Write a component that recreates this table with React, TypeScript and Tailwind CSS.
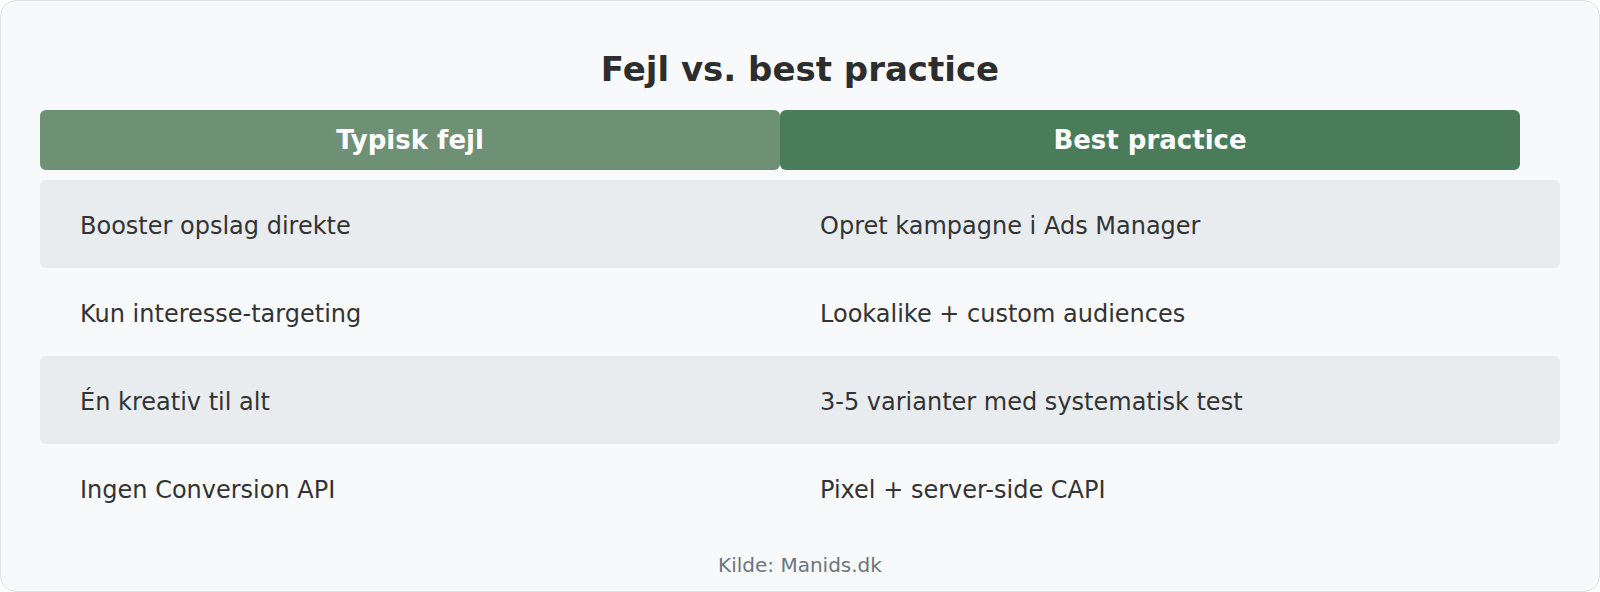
const rows = [
  { bad: "Booster opslag direkte", good: "Opret kampagne i Ads Manager" },
  { bad: "Kun interesse-targeting", good: "Lookalike + custom audiences" },
  { bad: "Én kreativ til alt", good: "3-5 varianter med systematisk test" },
  { bad: "Ingen Conversion API", good: "Pixel + server-side CAPI" },
];

export default function App() {
  return (
    <div
      className="h-[592px] w-[1600px] bg-white"
      style={{ fontFamily: '"DejaVu Sans", "Noto Sans", sans-serif' }}
    >
      <div className="flex h-[592px] w-[1600px] flex-col rounded-[16px] border border-[#dee2e6] bg-[#f8f9fa] px-[39px] pt-[51px]">
        <h1 className="h-[34px] text-center text-[34px] font-bold leading-[34px] text-[#2d2d2d]">
          Fejl vs. best practice
        </h1>

        <div className="mt-[24px] flex">
          <div className="flex h-[60px] w-[740px] items-center justify-center rounded-[6px] bg-[#6e9075] text-[26px] font-bold leading-[26px] text-white">
            Typisk fejl
          </div>
          <div className="flex h-[60px] w-[740px] items-center justify-center rounded-[6px] bg-[#4a7c59] text-[26px] font-bold leading-[26px] text-white">
            Best practice
          </div>
        </div>

        <div className="mt-[10px] flex flex-col">
          {rows.map((row, i) => (
            <div
              key={row.bad}
              className={`flex h-[88px] w-[1520px] items-center pt-[4px] text-[24px] leading-[24px] text-[#333333] ${
                i % 2 === 0 ? "rounded-[6px] bg-[#e9ecef]" : ""
              }`}
            >
              <div className="w-[740px] pl-[40px]">{row.bad}</div>
              <div className="w-[740px] pl-[40px]">{row.good}</div>
            </div>
          ))}
        </div>

        <p className="mt-[23px] text-center text-[20px] leading-[20px] text-[#6c757d]">
          Kilde: Manids.dk
        </p>
      </div>
    </div>
  );
}
